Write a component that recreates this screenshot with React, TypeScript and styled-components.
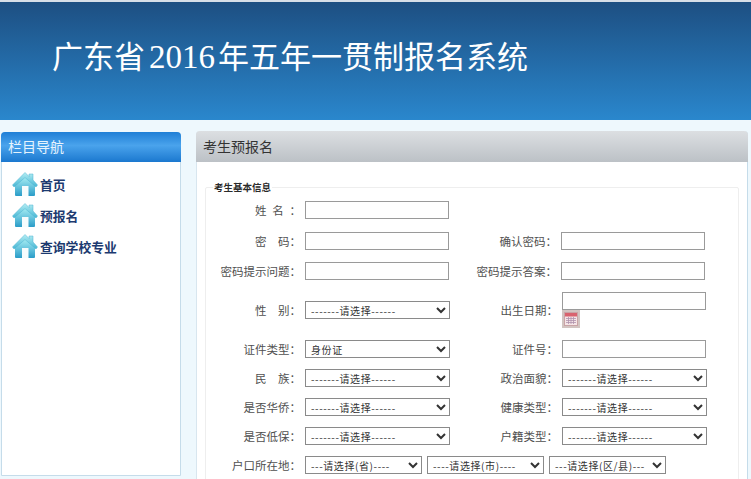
import React from 'react';
import styled, { createGlobalStyle } from 'styled-components';

const CJK = `"Noto Sans CJK SC", "Liberation Sans", sans-serif`;
const CHOOSE = '-------请选择------';

const GlobalStyle = createGlobalStyle`
    html, body {
        margin: 0;
        padding: 0;
        height: 479px;
        overflow: hidden;
        background: #eef8fd;
        font-family: ${CJK};
    }
`;

const HomeIcon = () => (
    <svg width="26" height="25" viewBox="0 0 26 25">
        <defs>
            <linearGradient id="roof" x1="0" y1="0" x2="0" y2="1">
                <stop offset="0" stopColor="#b4eef3" />
                <stop offset="1" stopColor="#45b6d4" />
            </linearGradient>
            <linearGradient id="wall" x1="0" y1="0" x2="0" y2="1">
                <stop offset="0" stopColor="#a6eef3" />
                <stop offset="1" stopColor="#2a9cc8" />
            </linearGradient>
        </defs>
        <path d="M3 13 L13 5 L23 13 V23 Q23 24 22 24 H4 Q3 24 3 23 Z" fill="url(#wall)" />
        <path d="M0.5 13 L13 0.5 L17 4.5 V2 H21 V8 L25.5 13 L24 15 L13 5.5 L2 15 Z" fill="url(#roof)" stroke="#4cb3d0" strokeWidth="0.5" />
        <rect x="10" y="14" width="6.5" height="10" fill="#f6fcfd" />
    </svg>
);

const CalendarIcon = () => (
    <svg width="14" height="14" viewBox="0 0 14 14">
        <rect x="0.5" y="0.5" width="13" height="13" fill="#f5e4e6" stroke="#c9a3a6" />
        <rect x="1" y="1" width="12" height="3.5" fill="#d9626e" />
        <path d="M2 6.5 H12 M2 8.5 H12 M2 10.5 H12 M4.5 5 V12 M7 5 V12 M9.5 5 V12" stroke="#b093ad" strokeWidth="0.8" />
    </svg>
);

const navItems = ['首页', '预报名', '查询学校专业'];

const App = () => {
    return (
        <Page>
            <GlobalStyle />
            <Banner>
                <BannerTitle>
                    广东省<Year>2016</Year>年五年一贯制报名系统
                </BannerTitle>
            </Banner>
            <Content>
                <Sidebar>
                    <SidebarHead>栏目导航</SidebarHead>
                    <NavList>
                        {navItems.map((item) => (
                            <NavItem key={item}>
                                <HomeIcon />
                                {item}
                            </NavItem>
                        ))}
                    </NavList>
                </Sidebar>
                <Main>
                    <MainHead>考生预报名</MainHead>
                    <InfoFieldset>
                        <InfoLegend>考生基本信息</InfoLegend>
                        <Row $h={31}>
                            <Label>姓&ensp;名&ensp;：</Label>
                            <TextInput />
                        </Row>
                        <Row $h={30}>
                            <Label>密　码：</Label>
                            <TextInput />
                            <SecondLabel>确认密码：</SecondLabel>
                            <TextInput />
                        </Row>
                        <Row $h={30}>
                            <Label>密码提示问题：</Label>
                            <TextInput />
                            <SecondLabel>密码提示答案：</SecondLabel>
                            <TextInput />
                        </Row>
                        <Row $h={48}>
                            <Label>性　别：</Label>
                            <Select>
                                <option>{CHOOSE}</option>
                            </Select>
                            <SecondLabel>出生日期：</SecondLabel>
                            <DateField>
                                <TextInput />
                                <CalendarButton>
                                    <CalendarIcon />
                                </CalendarButton>
                            </DateField>
                        </Row>
                        <Row $h={29}>
                            <Label>证件类型：</Label>
                            <Select>
                                <option>身份证</option>
                            </Select>
                            <SecondLabel>证件号：</SecondLabel>
                            <TextInput />
                        </Row>
                        <Row $h={29}>
                            <Label>民　族：</Label>
                            <Select>
                                <option>{CHOOSE}</option>
                            </Select>
                            <SecondLabel>政治面貌：</SecondLabel>
                            <Select>
                                <option>{CHOOSE}</option>
                            </Select>
                        </Row>
                        <Row $h={29}>
                            <Label>是否华侨：</Label>
                            <Select>
                                <option>{CHOOSE}</option>
                            </Select>
                            <SecondLabel>健康类型：</SecondLabel>
                            <Select>
                                <option>{CHOOSE}</option>
                            </Select>
                        </Row>
                        <Row $h={29}>
                            <Label>是否低保：</Label>
                            <Select>
                                <option>{CHOOSE}</option>
                            </Select>
                            <SecondLabel>户籍类型：</SecondLabel>
                            <Select>
                                <option>{CHOOSE}</option>
                            </Select>
                        </Row>
                        <Row $h={29}>
                            <Label>户口所在地：</Label>
                            <AddressGroup>
                                <Select $w={117}>
                                    <option>---请选择(省)----</option>
                                </Select>
                                <Select $w={117}>
                                    <option>----请选择(市)----</option>
                                </Select>
                                <Select $w={117}>
                                    <option>---请选择(区/县)---</option>
                                </Select>
                            </AddressGroup>
                        </Row>
                    </InfoFieldset>
                </Main>
            </Content>
        </Page>
    );
};

export default App;

const Page = styled.div`
    width: 751px;
    height: 479px;
    overflow: hidden;
`;

const Banner = styled.header`
    height: 118px;
    border-top: 2px solid #d7dfe8;
    background: linear-gradient(#1d4f82, #2a87cd);
    display: flex;
    align-items: flex-start;
`;

const BannerTitle = styled.h1`
    margin: 33px 0 0 52px;
    font-size: 31px;
    line-height: 40px;
    font-weight: 400;
    color: #fff;
    white-space: nowrap;
`;

const Year = styled.span`
    font-family: "Liberation Serif", serif;
    font-size: 33px;
    margin: 0 3px 0 4px;
`;

const Content = styled.div`
    display: flex;
    gap: 15px;
    padding: 12px 3px 0 1px;
`;

const Sidebar = styled.aside`
    width: 180px;
    flex: none;
    height: 344px;
    box-sizing: border-box;
    background: #fff;
    border: 1px solid #c5dcea;
    border-radius: 4px 4px 0 0;
`;

const SidebarHead = styled.div`
    height: 30px;
    margin: -1px -1px 0;
    padding-left: 7px;
    border-radius: 4px 4px 0 0;
    background: linear-gradient(#1f7fd6, #4aa3ec 45%, #1b78cf);
    color: #e6f3fd;
    font-size: 14px;
    line-height: 29px;
`;

const NavList = styled.ul`
    list-style: none;
    margin: 0;
    padding: 7px 0 0 10px;
`;

const NavItem = styled.li`
    display: flex;
    align-items: center;
    gap: 2px;
    height: 31px;
    font-size: 12.8px;
    font-weight: 700;
    color: #1c3a70;
`;

const Main = styled.main`
    flex: 1;
    height: 360px;
    margin-top: -1px;
    box-sizing: border-box;
    background: #fff;
    border-right: 1px solid #c5dcea;
    border-left: 1px solid #d8e6ef;
    border-radius: 4px 4px 0 0;
`;

const MainHead = styled.div`
    height: 31px;
    margin: 0 -1px;
    padding-left: 7px;
    border-radius: 4px 4px 0 0;
    background: linear-gradient(#dcdfe2, #bcc1c6);
    color: #333;
    font-size: 14px;
    line-height: 30px;
`;

const InfoFieldset = styled.fieldset`
    margin: 19px 8px 0 8px;
    padding: 8px 0 0;
    border: 1px solid #eeeeee;
    border-radius: 2px;
    min-width: 0;
`;

const InfoLegend = styled.legend`
    margin-left: 7px;
    padding: 0 1px;
    font-size: 9.5px;
    line-height: 12px;
    font-weight: 700;
    color: #2a2a2a;
`;

const Row = styled.div<{ $h: number }>`
    display: flex;
    height: ${(p) => p.$h}px;
    align-items: center;
    padding-bottom: ${(p) => p.$h - (p.$h === 48 ? 36 : 18)}px;
    box-sizing: border-box;
`;

const Label = styled.label`
    flex: none;
    width: 95px;
    margin-right: 4px;
    text-align: right;
    font-size: 11.5px;
    color: #505050;
    white-space: nowrap;
`;

const SecondLabel = styled(Label)`
    width: 107px;
    margin-left: 1px;
`;

const TextInput = styled.input`
    display: block;
    width: 144px;
    height: 18px;
    flex: none;
    padding: 0;
    box-sizing: border-box;
    border: 1px solid #9a9a9a;
    background: #fff;
`;

const Select = styled.select<{ $w?: number }>`
    display: block;
    width: ${(p) => p.$w ?? 145}px;
    height: 18px;
    flex: none;
    padding: 0 0 0 1px;
    box-sizing: border-box;
    border: 1px solid #8a8a8a;
    border-radius: 0;
    background: #fff;
    color: #333;
    font-family: ${CJK};
    font-size: 10px;
    letter-spacing: 0.6px;
`;

const DateField = styled.div`
    display: flex;
    flex-direction: column;
    align-items: flex-start;
`;

const CalendarButton = styled.span`
    display: flex;
    align-items: center;
    justify-content: center;
    width: 18px;
    height: 18px;
    box-sizing: border-box;
    background: #d2c4c1;
`;

const AddressGroup = styled.div`
    display: flex;
    gap: 5px;
`;
